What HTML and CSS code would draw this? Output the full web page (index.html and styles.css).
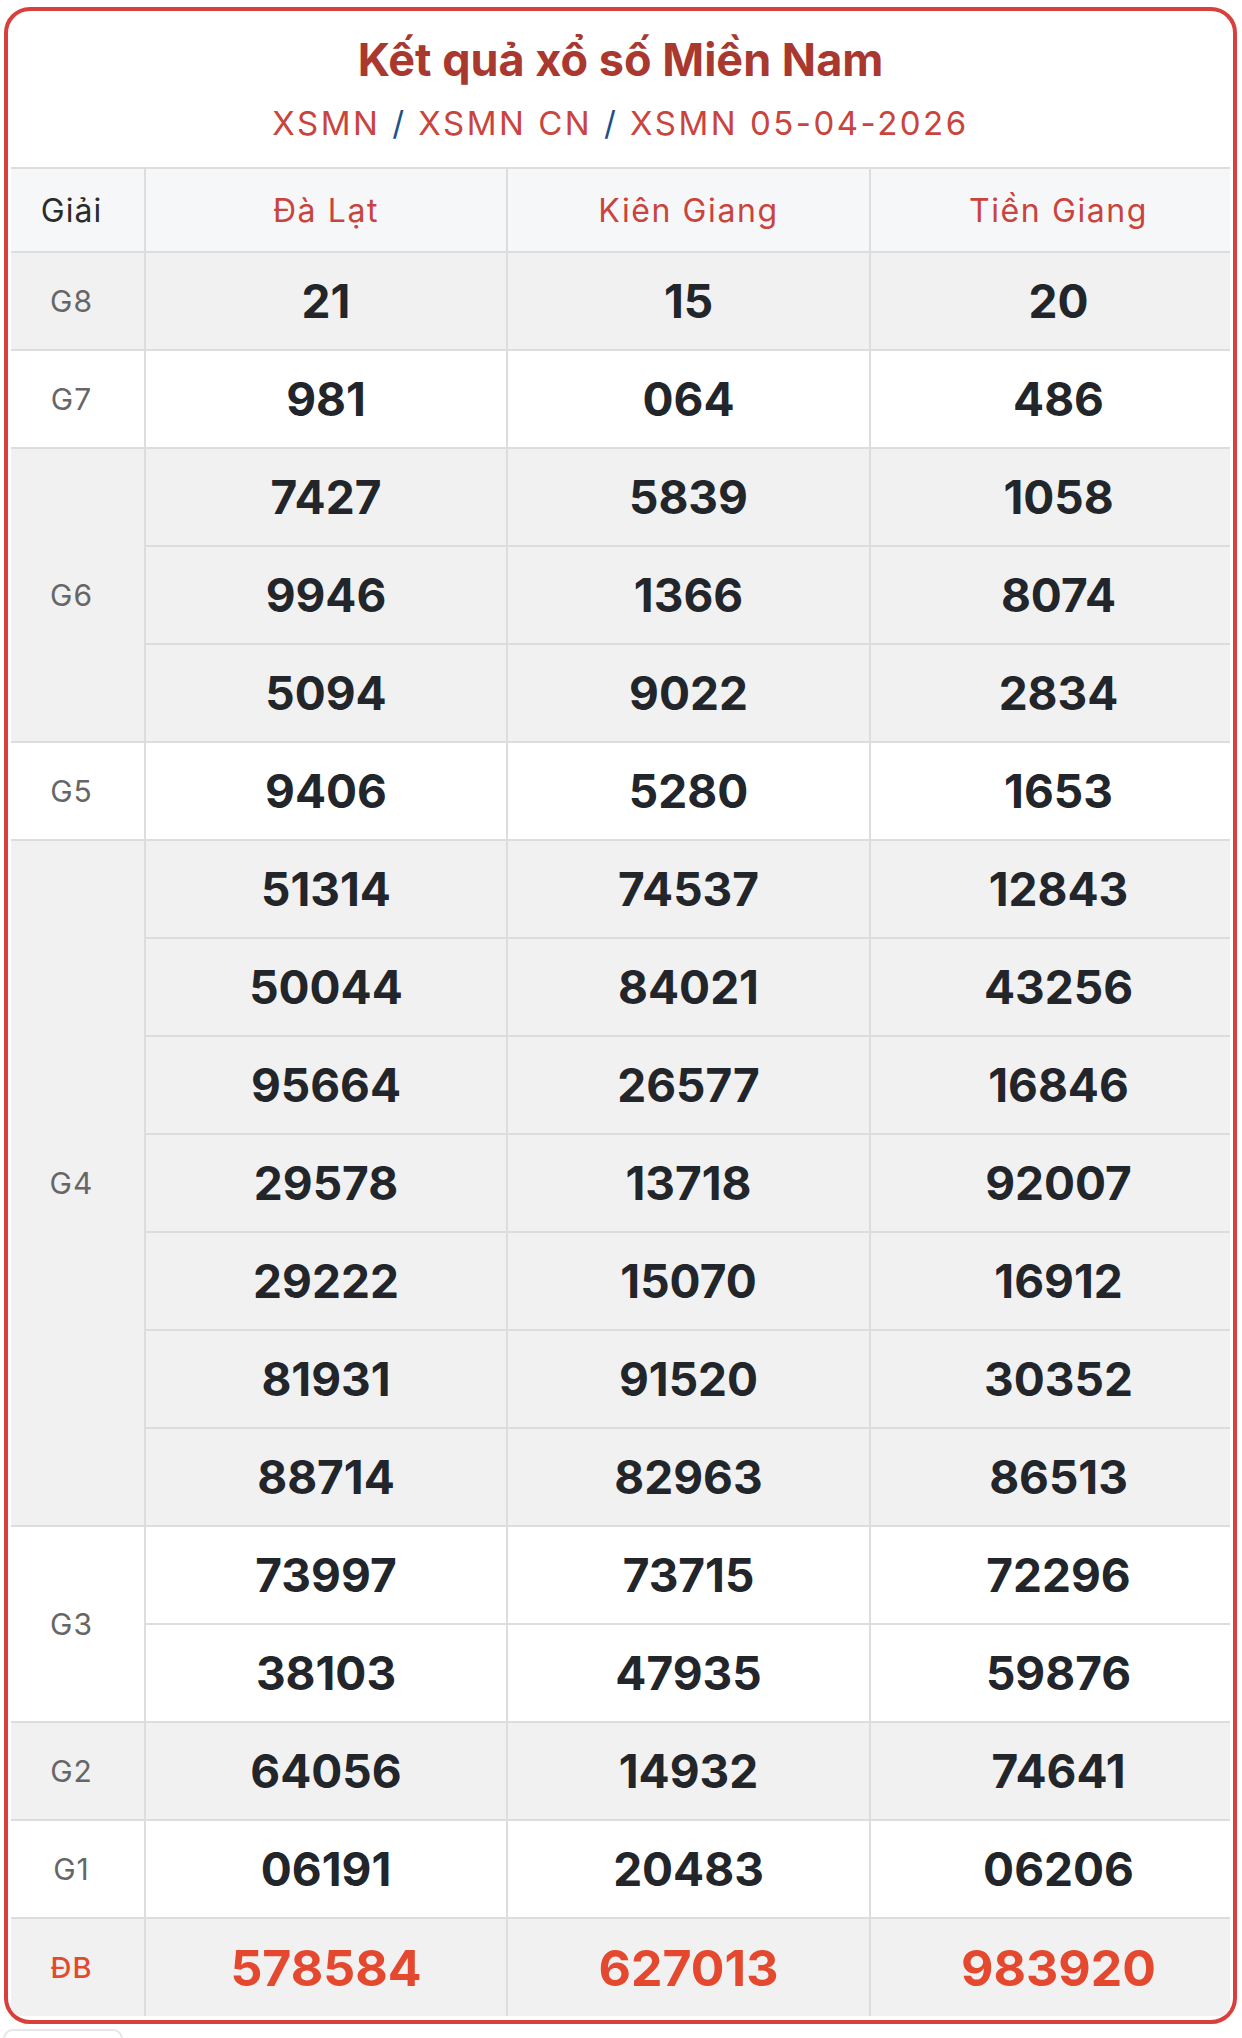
FILE: index.html
```html
<!DOCTYPE html>
<html lang="vi">
<head>
<meta charset="utf-8">
<title>Kết quả xổ số Miền Nam</title>
<link rel="stylesheet" href="styles.css">
</head>
<body>
<div class="card">
  <div class="head">
    <h1 class="title">Kết quả xổ số Miền Nam</h1>
    <div class="sub"><span>XSMN</span> <i>/</i> <span>XSMN CN</span> <i>/</i> <span>XSMN 05-04-2026</span></div>
  </div>
  <table class="kq">
    <colgroup><col class="c0"><col class="c1"><col class="c2"><col class="c3"></colgroup>
    <thead>
      <tr><th class="lbl-h">Giải</th><th>Đà Lạt</th><th>Kiên Giang</th><th>Tiền Giang</th></tr>
    </thead>
    <tbody>
      <tr class="g"><td class="lbl">G8</td><td>21</td><td>15</td><td>20</td></tr>
      <tr class="w"><td class="lbl">G7</td><td>981</td><td>064</td><td>486</td></tr>
      <tr class="g"><td class="lbl" rowspan="3">G6</td><td>7427</td><td>5839</td><td>1058</td></tr>
      <tr class="g"><td>9946</td><td>1366</td><td>8074</td></tr>
      <tr class="g"><td>5094</td><td>9022</td><td>2834</td></tr>
      <tr class="w"><td class="lbl">G5</td><td>9406</td><td>5280</td><td>1653</td></tr>
      <tr class="g"><td class="lbl" rowspan="7">G4</td><td>51314</td><td>74537</td><td>12843</td></tr>
      <tr class="g"><td>50044</td><td>84021</td><td>43256</td></tr>
      <tr class="g"><td>95664</td><td>26577</td><td>16846</td></tr>
      <tr class="g"><td>29578</td><td>13718</td><td>92007</td></tr>
      <tr class="g"><td>29222</td><td>15070</td><td>16912</td></tr>
      <tr class="g"><td>81931</td><td>91520</td><td>30352</td></tr>
      <tr class="g"><td>88714</td><td>82963</td><td>86513</td></tr>
      <tr class="w"><td class="lbl" rowspan="2">G3</td><td>73997</td><td>73715</td><td>72296</td></tr>
      <tr class="w"><td>38103</td><td>47935</td><td>59876</td></tr>
      <tr class="g"><td class="lbl">G2</td><td>64056</td><td>14932</td><td>74641</td></tr>
      <tr class="w"><td class="lbl">G1</td><td>06191</td><td>20483</td><td>06206</td></tr>
      <tr class="g db"><td class="lbl">ĐB</td><td>578584</td><td>627013</td><td>983920</td></tr>
    </tbody>
  </table>
</div>
<div class="next"></div>
</body>
</html>
```

FILE: styles.css
```css
* { box-sizing: border-box; }
html, body { margin: 0; padding: 0; background: #fff; }
body { font-family: Inter, "Noto Sans", sans-serif; color: #222428; }

.card {
  margin: 7px 5px 0 4px;
  border: 4px solid #d8403b;
  border-radius: 26px;
  padding: 0 3px 4px 3px;
  overflow: hidden;
  background: #fff;
}

.head { height: 156px; padding-top: 22px; text-align: center; }
.title {
  margin: 0;
  font-size: 45px;
  line-height: 54px;
  font-weight: 700;
  color: #a9382f;
}
.sub {
  margin-top: 16px;
  font-size: 33px;
  line-height: 40px;
  letter-spacing: 2.5px;
  color: #c9443c;
}
.sub i { font-style: normal; color: #20508a; }

.kq {
  width: 100%;
  border-collapse: collapse;
  table-layout: fixed;
}
.c0 { width: 134px; }
.c1 { width: 362px; }
.c2 { width: 363px; }
.c3 { width: auto; }

.kq th, .kq td {
  border: 2px solid #dddddd;
  text-align: center;
  padding: 0;
}
.kq tr > :first-child { border-left: 0; }
.kq tr > :last-child { border-right: 0; padding-left: 16px; }
.kq tbody tr:last-child td { border-bottom: 0; }

.kq thead th {
  height: 84px;
  background: #f6f7f9;
  font-size: 32px;
  font-weight: 400;
  letter-spacing: 1.6px;
  color: #c9443c;
}
.kq thead th.lbl-h { color: #2b2b2b; letter-spacing: 1px; padding-right: 12px; }

.kq tbody td {
  height: 98px;
  font-size: 46px;
  font-weight: 700;
  color: #222529;
}
.kq tr.g td { background: #f1f1f1; }
.kq tr.w td { background: #ffffff; }

.kq td.lbl {
  font-size: 30px;
  font-weight: 400;
  letter-spacing: 1px;
  color: #666666;
  padding-right: 12px;
}

.kq tr.db td {
  font-size: 50px;
  color: #e4482e;
}
.kq tr.db td.lbl {
  font-size: 29px;
  font-weight: 500;
  color: #e4482e;
}

.next {
  margin: 5px 0 0 3px;
  width: 120px;
  height: 30px;
  border: 2px solid #e6e6e6;
  border-radius: 10px;
}
```
